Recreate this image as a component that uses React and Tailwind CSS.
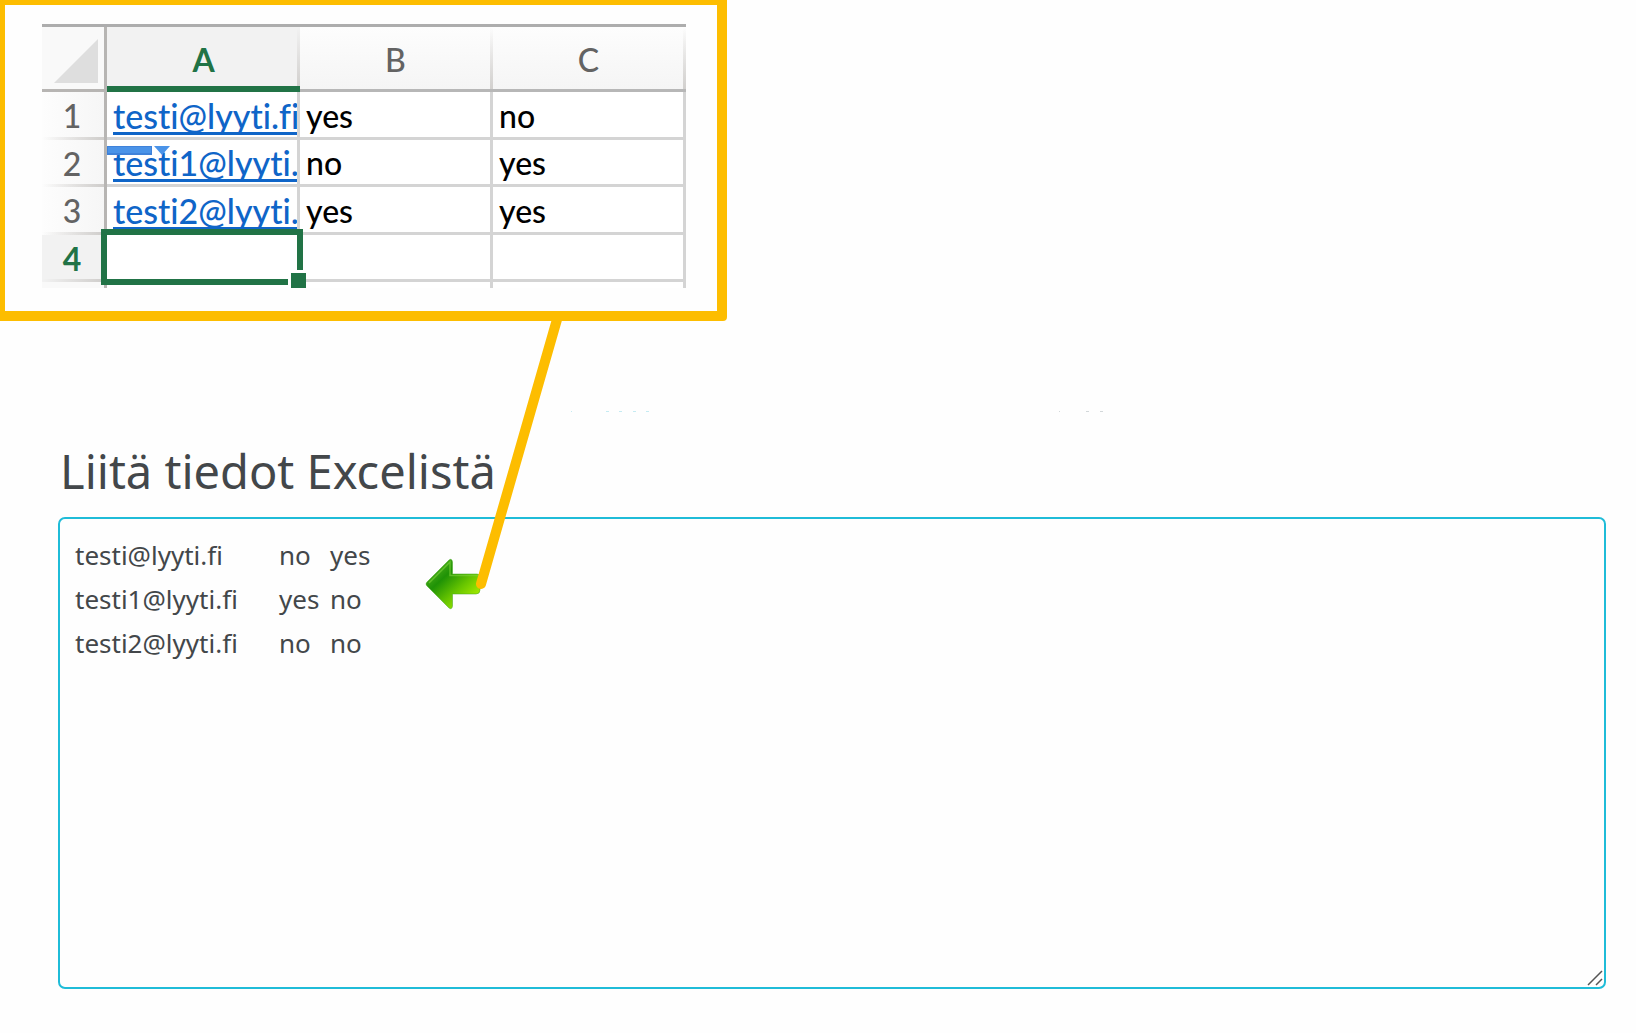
import React from "react";

const columns = ["A", "B", "C"];

const sheetRows = [
  { email: "testi@lyyti.fi", values: ["yes", "no"] },
  { email: "testi1@lyyti.fi", values: ["no", "yes"] },
  { email: "testi2@lyyti.fi", values: ["yes", "yes"] },
];

// the short address needs a second tab to reach the same column
const pastedText = [
  "testi@lyyti.fi\t\tno\tyes",
  "testi1@lyyti.fi\tyes\tno",
  "testi2@lyyti.fi\tno\tno",
].join("\n");

function RowHeader({ children, active }) {
  return (
    <th
      scope="row"
      className={
        active
          ? "relative border-r-3 border-[#b7b5b3] bg-[#f2f2f2] p-0 pr-0.5 font-bold text-[#217346]"
          : "relative border-r-3 border-[#b7b5b3] bg-linear-to-r from-[#fdfdfd] to-[#f6f6f6] p-0 pr-0.5 font-medium text-[#636363]"
      }
    >
      {children}
      <span className="absolute bottom-0 left-0 h-[3px] w-full bg-linear-to-r from-transparent to-[#cfcdcb]" />
    </th>
  );
}

function Selection() {
  return (
    <>
      <span className="absolute -top-[6px] -right-[6px] -bottom-[6px] -left-[6px] border-6 border-[#217346]" />
      <span className="absolute -right-[9px] -bottom-[9px] h-[18px] w-[18px] border-t-3 border-l-3 border-white bg-[#217346]" />
    </>
  );
}

function PasteMarker() {
  return (
    <svg className="absolute top-[5px] left-0" width="64" height="10" viewBox="0 0 64 10" aria-hidden="true">
      <rect x="0" y="1" width="45" height="9" fill="#3f82da" />
      <rect x="1" y="2" width="43" height="6" fill="#4a93e8" />
      <path d="M47 1h16l-8 9z" fill="#4a93e8" />
    </svg>
  );
}

function Sheet() {
  return (
    <table className="w-full table-fixed border-separate border-spacing-0 border-t-3 border-[#adadad] bg-white font-[Lato,sans-serif] text-[32px] leading-[42px]">
      <colgroup>
        <col className="w-[65px]" />
        <col />
        <col />
        <col />
      </colgroup>
      <thead>
        <tr className="h-[65px]">
          <td className="border-r-3 border-b-3 border-[#b7b5b3] bg-[#f9f9f9] p-0 pt-1.5">
            <svg className="ml-3" width="46" height="46" viewBox="0 0 46 46" aria-hidden="true">
              <path d="M0 45L44 1v44z" fill="#dedede" />
            </svg>
          </td>
          {columns.map((name) => (
            <th
              key={name}
              scope="col"
              className={
                name === "A"
                  ? "relative border-b-6 border-[#217346] bg-[#f2f2f2] p-0 pt-1.5 font-bold text-[#217346]"
                  : "relative border-b-3 border-[#b7b7b7] bg-linear-to-b from-[#fdfdfd] to-[#f5f5f5] p-0 pt-1 pr-0.5 font-medium text-[#636363]"
              }
            >
              {name}
              <span className="absolute top-0 right-0 h-full w-[3px] bg-linear-to-b from-transparent to-[#d2d0ce]" />
            </th>
          ))}
        </tr>
      </thead>
      <tbody>
        {sheetRows.map((row, index) => (
          <tr key={row.email} className="odd:h-[48px] even:h-[47px]">
            <RowHeader>{index + 1}</RowHeader>
            <td className="relative border-r-3 border-b-3 border-[#d4d4d4] p-0 align-bottom">
              {index === 1 && <PasteMarker />}
              <div className="ml-[6px] overflow-hidden text-[34px] font-medium whitespace-nowrap">
                <a
                  href={"mailto:" + row.email}
                  className="text-[#0f65c8] underline decoration-3 underline-offset-3 [font-variant-ligatures:none] [text-decoration-skip-ink:none]"
                >
                  {row.email}
                </a>
              </div>
            </td>
            {row.values.map((value, colIndex) => (
              <td key={colIndex} className="border-r-3 border-b-3 border-[#d4d4d4] p-0 pl-[6px] align-bottom font-medium text-black">
                {value}
              </td>
            ))}
          </tr>
        ))}
        <tr className="h-[47px]">
          <RowHeader active>4</RowHeader>
          <td className="relative border-r-3 border-b-3 border-[#d4d4d4] p-0">
            <Selection />
          </td>
          <td className="border-r-3 border-b-3 border-[#d4d4d4] p-0" />
          <td className="border-r-3 border-b-3 border-[#d4d4d4] p-0" />
        </tr>
        <tr className="h-[6px]">
          <td className="border-r-3 border-[#b7b5b3] bg-[#f9f9f9] p-0" />
          <td className="border-r-3 border-[#d4d4d4] p-0" />
          <td className="border-r-3 border-[#d4d4d4] p-0" />
          <td className="border-r-3 border-[#d4d4d4] p-0" />
        </tr>
      </tbody>
    </table>
  );
}

// Line from the sheet down to the green arrow in the text box
function Connector() {
  return (
    <svg
      className="pointer-events-none absolute top-0 left-0"
      width="1120"
      height="640"
      viewBox="0 0 1120 640"
      aria-hidden="true"
    >
      <defs>
        <linearGradient id="arrow" x1="0" y1="0" x2="1" y2="1">
          <stop offset="0.15" stopColor="#4caf1a" />
          <stop offset="0.35" stopColor="#1f9206" />
          <stop offset="0.6" stopColor="#66c400" />
          <stop offset="0.85" stopColor="#a6ec00" />
        </linearGradient>
      </defs>
      <path
        d="M427 582L449 560Q452 558 452.500 562V574H477Q480 574 480 577V590Q480 594 476 594H452.500V606Q452 610 449 608L427 586Q425 584 427 582z"
        fill="url(#arrow)"
        stroke="#3fa51c"
        strokeOpacity="0.5"
        strokeWidth="1"
      />
      <path d="M429 583L450 562V575.500H478" fill="none" stroke="#7ed33a" strokeOpacity="0.6" strokeWidth="1.500" />
      <path d="M558 316L481 584" stroke="#fdbd00" strokeWidth="10" strokeLinecap="round" />
      <path d="M571 411.500h1M606 411.500h3M619 411.500h3M633 411.500h3M646 411.500h3" stroke="#c5ebf2" />
      <path d="M1059 411.500h1M1086 411.500h3M1100 411.500h3" stroke="#d3d8da" />
    </svg>
  );
}

function PasteForm() {
  return (
    <form className="pt-[118px] pr-[30px] pl-[58px]">
      <label
        htmlFor="excel-data"
        className="block pl-0.5 font-['Noto_Sans',sans-serif] text-[47px] leading-[64px] text-[#43474a]"
      >
        Liitä tiedot Excelistä
      </label>
      <div className="relative mt-3.5">
        <textarea
          id="excel-data"
          defaultValue={pastedText}
          spellCheck={false}
          className="block h-[472px] w-full resize-none rounded-[7px] border-2 border-[#1fbcd8] px-[15px] py-3.5 font-['Noto_Sans',sans-serif] text-[26px] leading-[44px] text-[#43474a] outline-none [tab-size:51px]"
        />
        <svg className="absolute right-[3px] bottom-[3px]" width="16" height="16" viewBox="0 0 16 16" aria-hidden="true">
          <path d="M1 15L15 1M9 15L15 9" stroke="#555" strokeWidth="1.500" />
        </svg>
      </div>
    </form>
  );
}

function App() {
  return (
    <main className="relative min-h-screen bg-[#fefefe]">
      <div className="w-[727px] rounded-br-[4px] border-t-5 border-r-10 border-b-10 border-l-5 border-[#fdbd00] bg-[#fefefe] pt-[19px] pr-[31px] pb-[23px] pl-[37px]">
        <Sheet />
      </div>
      <PasteForm />
      <Connector />
    </main>
  );
}

export default App;
